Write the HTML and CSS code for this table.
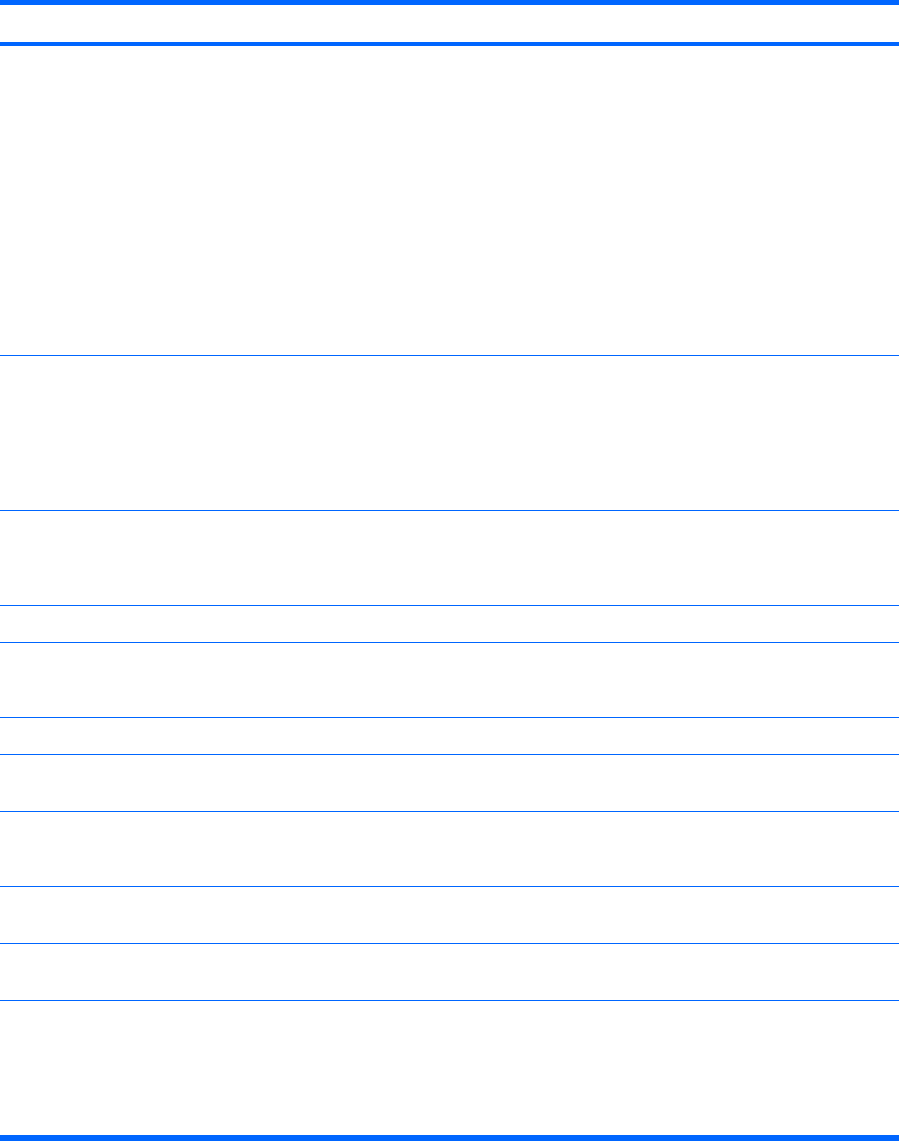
FILE: index.html
```html
<!DOCTYPE html>
<html lang="en">
<head>
<meta charset="utf-8">
<title>Table</title>
<link rel="stylesheet" href="styles.css">
</head>
<body>
<div class="table">
  <div class="head"></div>
  <div class="row r1"></div>
  <div class="row r2"></div>
  <div class="row r3"></div>
  <div class="row r4"></div>
  <div class="row r5"></div>
  <div class="row r6"></div>
  <div class="row r7"></div>
  <div class="row r8"></div>
  <div class="row r9"></div>
  <div class="row r10"></div>
  <div class="row r11 last"></div>
</div>
</body>
</html>
```
FILE: styles.css
```css
html, body {
  margin: 0;
  padding: 0;
  background: #ffffff;
  font-family: "Liberation Sans", Arial, sans-serif;
}
.table {
  width: 899px;
  display: flex;
  flex-direction: column;
  border-top: 5px solid #0066ff;
  border-bottom: 6px solid #0066ff;
}
.head {
  height: 37px;
  border-bottom: 4px solid #0066ff;
}
.row {
  border-bottom: 1px solid #0066ff;
}
.row.last { border-bottom: none; }
.r1 { height: 309px; }
.r2 { height: 154px; }
.r3 { height: 94px; }
.r4 { height: 36px; }
.r5 { height: 74px; }
.r6 { height: 36px; }
.r7 { height: 56px; }
.r8 { height: 74px; }
.r9 { height: 56px; }
.r10 { height: 56px; }
.r11 { height: 134px; }
```
